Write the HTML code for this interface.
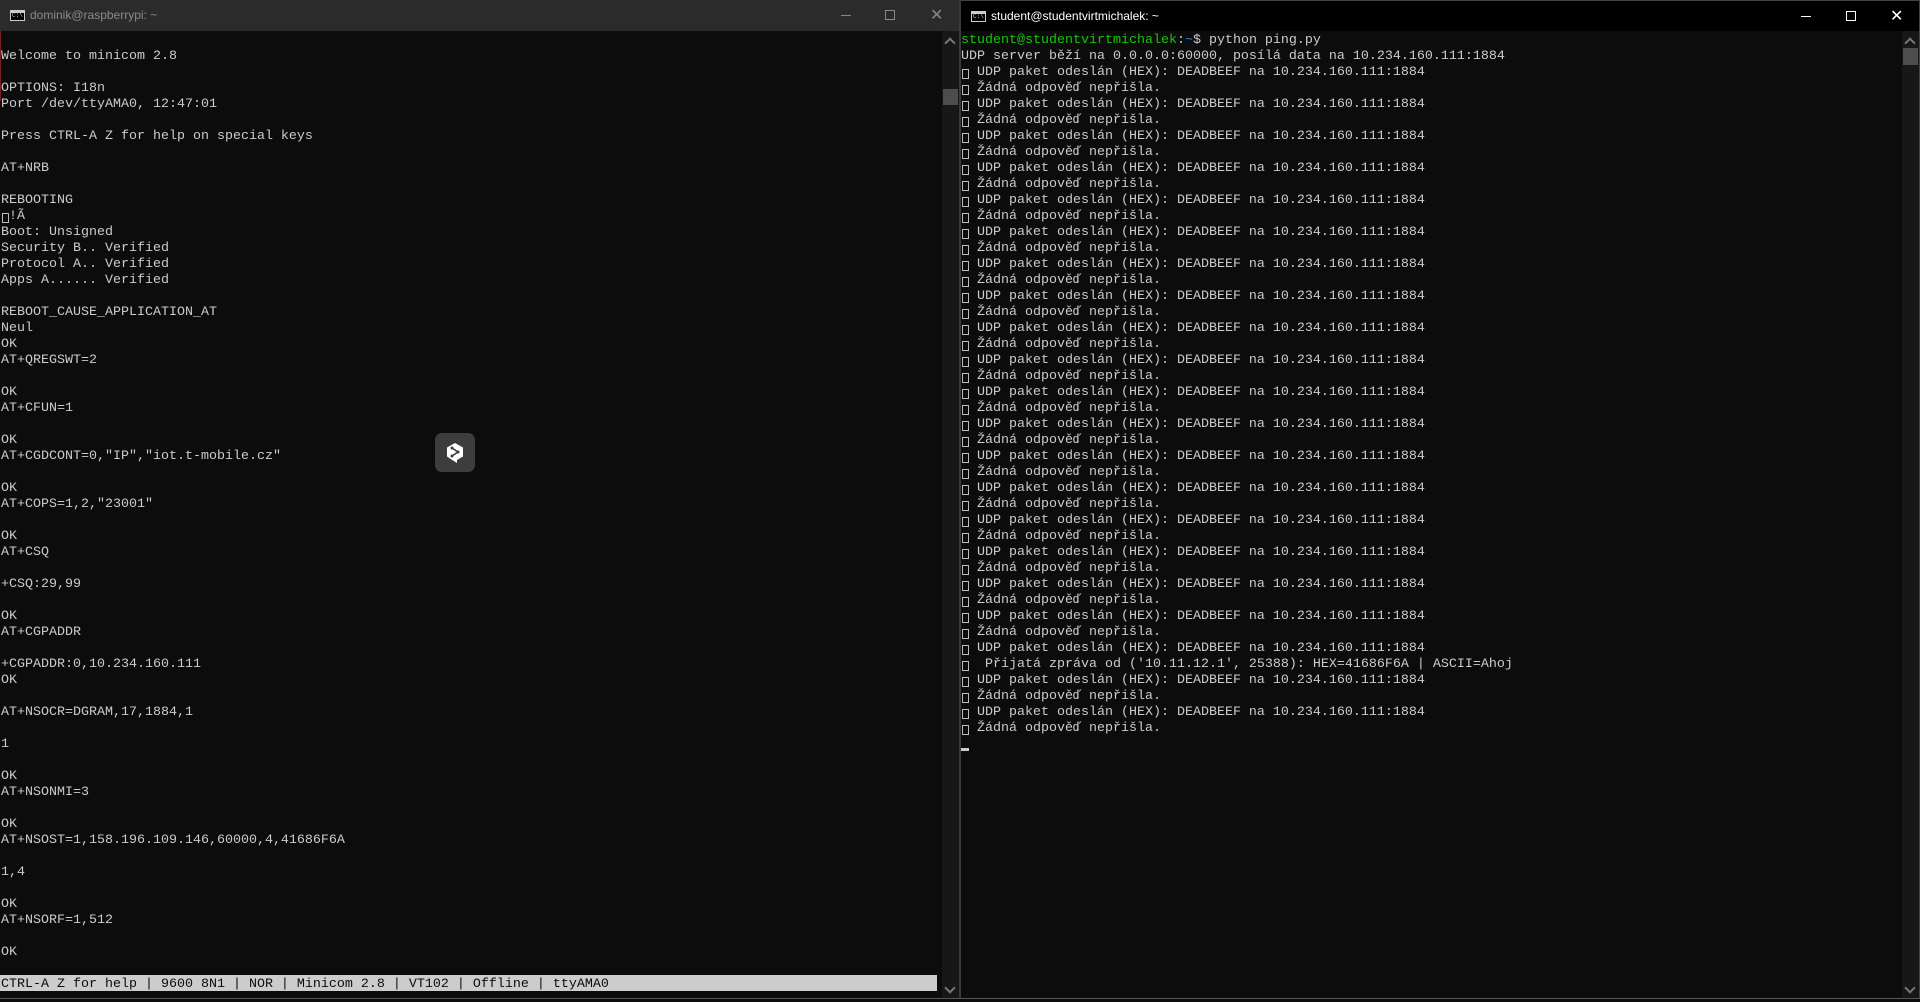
<!DOCTYPE html>
<html><head><meta charset="utf-8"><style>
*{margin:0;padding:0;box-sizing:border-box}
body{width:1920px;height:1002px;background:#0c0c0c;overflow:hidden;position:relative;font-family:"Liberation Sans",sans-serif}
.win{position:absolute;top:0;height:1002px;background:#0c0c0c}
.tb{position:absolute;left:0;right:0;top:0;height:31px}
.ttl{position:absolute;left:30px;top:8px;font-size:12px}
.ico{position:absolute;left:10px;top:10px;width:15px;height:11px;border:1px solid #ccc;background:#000}
.ico:before{content:"";position:absolute;left:0;right:0;top:0;height:2px;background:#ccc}
.ico:after{content:"C:\\";position:absolute;left:1px;top:2px;font-size:6px;color:#ccc;font-family:"Liberation Mono",monospace;line-height:6px}
pre{position:absolute;top:33px;font-family:"Liberation Mono",monospace;font-size:13.33px;line-height:16px;color:#cccccc;white-space:pre}
.b{display:inline-block;width:8px;height:16px;vertical-align:top;position:relative}
.b:after{content:"";position:absolute;left:1px;top:4px;width:5px;height:8px;border:1px solid #bbb}
.sb{position:absolute;width:17px;background:#171717}
.th{position:absolute;left:1px;width:15px;background:#4d4d4d}
.arr{position:absolute;left:4px;width:8px;height:8px;border-left:2px solid #777;border-top:2px solid #777}
.min{position:absolute;height:1px;width:10px;top:15px}
.max{position:absolute;width:10px;height:10px;top:10px;border:1px solid}
.x{position:absolute;top:8px;font-size:16px;line-height:16px}
</style></head><body>
<div class="win" style="left:0;width:959px">
 <div class="tb" style="background:#2b2b2b">
  <div class="ico"></div>
  <div class="ttl" style="color:#8a8a8a">dominik@raspberrypi: ~</div>
  <div class="min" style="left:841px;background:#888"></div>
  <div class="max" style="left:885px;border-color:#888"></div>
  <div class="x" style="left:930px;color:#888">✕</div>
 </div>
 <div style="position:absolute;left:0;top:31px;width:1px;height:70px;background:#7a1f1f"></div>
<pre style="left:1px">

Welcome to minicom 2.8

OPTIONS: I18n
Port /dev/ttyAMA0, 12:47:01

Press CTRL-A Z for help on special keys

AT+NRB

REBOOTING
<span class="b"></span>!Ã
Boot: Unsigned
Security B.. Verified
Protocol A.. Verified
Apps A...... Verified

REBOOT_CAUSE_APPLICATION_AT
Neul
OK
AT+QREGSWT=2

OK
AT+CFUN=1

OK
AT+CGDCONT=0,"IP","iot.t-mobile.cz"

OK
AT+COPS=1,2,"23001"

OK
AT+CSQ

+CSQ:29,99

OK
AT+CGPADDR

+CGPADDR:0,10.234.160.111
OK

AT+NSOCR=DGRAM,17,1884,1

1

OK
AT+NSONMI=3

OK
AT+NSOST=1,158.196.109.146,60000,4,41686F6A

1,4

OK
AT+NSORF=1,512

OK
</pre>
 <div style="position:absolute;left:0;top:975px;width:937px;height:16px;background:#cccccc"></div>
 <pre style="left:1px;top:977px;color:#0c0c0c">CTRL-A Z for help | 9600 8N1 | NOR | Minicom 2.8 | VT102 | Offline | ttyAMA0</pre>
 <div class="sb" style="left:942px;top:31px;height:967px">
  <div class="arr" style="top:8px;transform:rotate(45deg)"></div>
  <div class="th" style="top:58px;height:16px"></div>
  <div class="arr" style="top:953px;transform:rotate(225deg)"></div>
 </div>
 <div style="position:absolute;left:435px;top:433px;width:40px;height:39px;border-radius:7px;background:#3d3d3d">
  <svg width="40" height="39" viewBox="0 0 40 39"><path d="M20 10 L28 14.5 V23.5 L22 27 V30 L18 27.5 L12 23.5 V14.5 Z" fill="#fff"/><path d="M17 15 L23 19 L17 23" stroke="#3d3d3d" stroke-width="1.6" fill="none"/><circle cx="17" cy="15" r="1.5" fill="#3d3d3d"/><circle cx="23" cy="19" r="1.5" fill="#3d3d3d"/><circle cx="17" cy="23" r="1.5" fill="#3d3d3d"/></svg>
 </div>
</div>
<div style="position:absolute;left:959px;top:0;width:2px;height:1002px;background:#3a3a3a"></div>
<div class="win" style="left:961px;width:959px">
 <div class="tb" style="background:#000;border-top:1px solid #444">
  <div class="ico"></div>
  <div class="ttl" style="color:#fff">student@studentvirtmichalek: ~</div>
  <div class="min" style="left:840px;background:#fff"></div>
  <div class="max" style="left:885px;border-color:#fff"></div>
  <div class="x" style="left:929px;color:#fff">✕</div>
 </div>
<pre style="left:0"><span style="color:#16c60c">student@studentvirtmichalek</span>:<span style="color:#3b78ff">~</span>$ python ping.py
UDP server běží na 0.0.0.0:60000, posílá data na 10.234.160.111:1884
<span class="b"></span> UDP paket odeslán (HEX): DEADBEEF na 10.234.160.111:1884
<span class="b"></span> Žádná odpověď nepřišla.
<span class="b"></span> UDP paket odeslán (HEX): DEADBEEF na 10.234.160.111:1884
<span class="b"></span> Žádná odpověď nepřišla.
<span class="b"></span> UDP paket odeslán (HEX): DEADBEEF na 10.234.160.111:1884
<span class="b"></span> Žádná odpověď nepřišla.
<span class="b"></span> UDP paket odeslán (HEX): DEADBEEF na 10.234.160.111:1884
<span class="b"></span> Žádná odpověď nepřišla.
<span class="b"></span> UDP paket odeslán (HEX): DEADBEEF na 10.234.160.111:1884
<span class="b"></span> Žádná odpověď nepřišla.
<span class="b"></span> UDP paket odeslán (HEX): DEADBEEF na 10.234.160.111:1884
<span class="b"></span> Žádná odpověď nepřišla.
<span class="b"></span> UDP paket odeslán (HEX): DEADBEEF na 10.234.160.111:1884
<span class="b"></span> Žádná odpověď nepřišla.
<span class="b"></span> UDP paket odeslán (HEX): DEADBEEF na 10.234.160.111:1884
<span class="b"></span> Žádná odpověď nepřišla.
<span class="b"></span> UDP paket odeslán (HEX): DEADBEEF na 10.234.160.111:1884
<span class="b"></span> Žádná odpověď nepřišla.
<span class="b"></span> UDP paket odeslán (HEX): DEADBEEF na 10.234.160.111:1884
<span class="b"></span> Žádná odpověď nepřišla.
<span class="b"></span> UDP paket odeslán (HEX): DEADBEEF na 10.234.160.111:1884
<span class="b"></span> Žádná odpověď nepřišla.
<span class="b"></span> UDP paket odeslán (HEX): DEADBEEF na 10.234.160.111:1884
<span class="b"></span> Žádná odpověď nepřišla.
<span class="b"></span> UDP paket odeslán (HEX): DEADBEEF na 10.234.160.111:1884
<span class="b"></span> Žádná odpověď nepřišla.
<span class="b"></span> UDP paket odeslán (HEX): DEADBEEF na 10.234.160.111:1884
<span class="b"></span> Žádná odpověď nepřišla.
<span class="b"></span> UDP paket odeslán (HEX): DEADBEEF na 10.234.160.111:1884
<span class="b"></span> Žádná odpověď nepřišla.
<span class="b"></span> UDP paket odeslán (HEX): DEADBEEF na 10.234.160.111:1884
<span class="b"></span> Žádná odpověď nepřišla.
<span class="b"></span> UDP paket odeslán (HEX): DEADBEEF na 10.234.160.111:1884
<span class="b"></span> Žádná odpověď nepřišla.
<span class="b"></span> UDP paket odeslán (HEX): DEADBEEF na 10.234.160.111:1884
<span class="b"></span> Žádná odpověď nepřišla.
<span class="b"></span> UDP paket odeslán (HEX): DEADBEEF na 10.234.160.111:1884
<span class="b"></span>  Přijatá zpráva od ('10.11.12.1', 25388): HEX=41686F6A | ASCII=Ahoj
<span class="b"></span> UDP paket odeslán (HEX): DEADBEEF na 10.234.160.111:1884
<span class="b"></span> Žádná odpověď nepřišla.
<span class="b"></span> UDP paket odeslán (HEX): DEADBEEF na 10.234.160.111:1884
<span class="b"></span> Žádná odpověď nepřišla.
</pre>
 <div style="position:absolute;left:0;top:748px;width:8px;height:3px;background:#ccc"></div>
 <div class="sb" style="left:941px;top:31px;height:967px">
  <div class="arr" style="top:8px;transform:rotate(45deg)"></div>
  <div class="th" style="top:17px;height:17px"></div>
  <div class="arr" style="top:953px;transform:rotate(225deg)"></div>
 </div>
 <div style="position:absolute;left:958px;top:0;width:1px;height:1002px;background:#444"></div>
</div>
<div style="position:absolute;left:0;top:998px;width:1920px;height:1px;background:#555"></div>
<div style="position:absolute;left:0;top:999px;width:1920px;height:3px;background:#0c0c0c"></div>
</body></html>
